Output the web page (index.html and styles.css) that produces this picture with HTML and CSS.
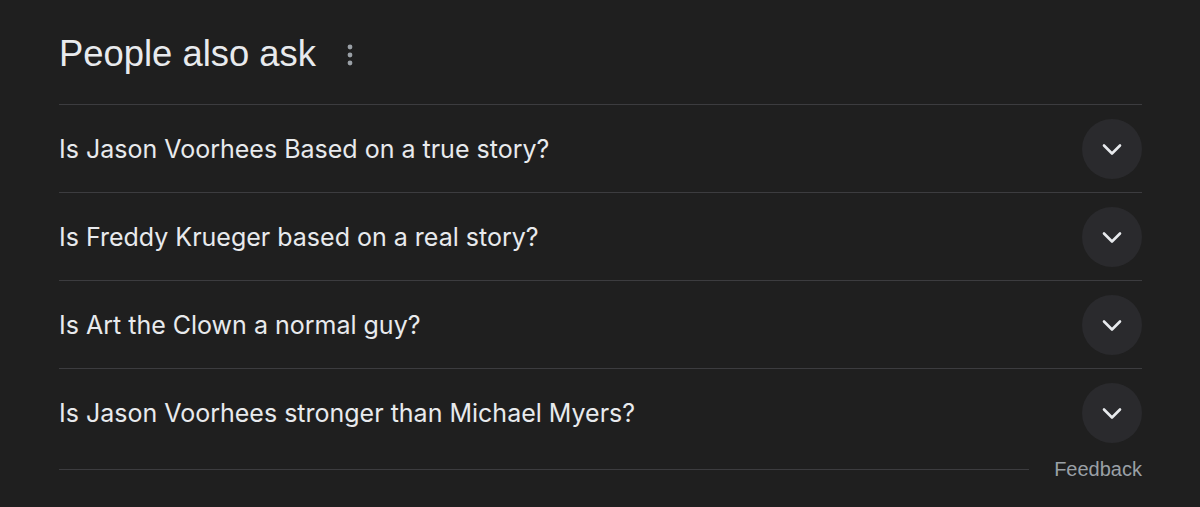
FILE: index.html
```html
<!DOCTYPE html>
<html>
<head>
<meta charset="utf-8">
<link rel="stylesheet" href="styles.css">
</head>
<body>
<div class="paa">
  <div class="head">
    <h2 class="title">People also ask</h2>
    <svg class="more" width="6" height="22" viewBox="0 0 6 22"><circle cx="3" cy="3" r="2.4" fill="#9aa0a6"/><circle cx="3" cy="11" r="2.4" fill="#9aa0a6"/><circle cx="3" cy="19" r="2.4" fill="#9aa0a6"/></svg>
  </div>
  <div class="row"><span class="q">Is Jason Voorhees Based on a true story?</span><span class="btn"><svg width="24" height="24" viewBox="0 0 24 24"><path d="M4 8.5l8 8 8-8" fill="none" stroke="#e8eaed" stroke-width="2.6" stroke-linecap="round" stroke-linejoin="round"/></svg></span></div>
  <div class="row"><span class="q">Is Freddy Krueger based on a real story?</span><span class="btn"><svg width="24" height="24" viewBox="0 0 24 24"><path d="M4 8.5l8 8 8-8" fill="none" stroke="#e8eaed" stroke-width="2.6" stroke-linecap="round" stroke-linejoin="round"/></svg></span></div>
  <div class="row"><span class="q">Is Art the Clown a normal guy?</span><span class="btn"><svg width="24" height="24" viewBox="0 0 24 24"><path d="M4 8.5l8 8 8-8" fill="none" stroke="#e8eaed" stroke-width="2.6" stroke-linecap="round" stroke-linejoin="round"/></svg></span></div>
  <div class="row"><span class="q">Is Jason Voorhees stronger than Michael Myers?</span><span class="btn"><svg width="24" height="24" viewBox="0 0 24 24"><path d="M4 8.5l8 8 8-8" fill="none" stroke="#e8eaed" stroke-width="2.6" stroke-linecap="round" stroke-linejoin="round"/></svg></span></div>
  <div class="foot"><span class="line"></span><span class="fb">Feedback</span></div>
</div>
</body>
</html>
```
FILE: styles.css
```css
html, body { margin: 0; padding: 0; background: #1f1f1f; }
body { width: 1200px; height: 507px; overflow: hidden; }
.paa { margin-left: 59px; width: 1083px; }
.head { height: 104px; display: flex; align-items: center; gap: 31px; box-sizing: border-box; padding-top: 3px; }
.title { margin: 0; font-family: "Liberation Sans", Arial, sans-serif; font-weight: 400; font-size: 36.4px; color: #e8eaed; }
.more { display: block; margin-top: 2px; }
.row { height: 88px; border-top: 1px solid #3c3c3f; display: flex; align-items: center; justify-content: space-between; box-sizing: border-box; }
.q { font-family: Inter, Roboto, sans-serif; font-size: 25px; color: #e8eaed; }
.btn { width: 60px; height: 60px; border-radius: 50%; background: #2a2a2d; display: flex; align-items: center; justify-content: center; }
.foot { display: flex; align-items: center; gap: 25px; height: 26px; }
.line { flex: 1; height: 1px; background: #3c3c3f; }
.fb { font-family: "Liberation Sans", Arial, sans-serif; font-size: 20px; color: #9aa0a6; }
```
